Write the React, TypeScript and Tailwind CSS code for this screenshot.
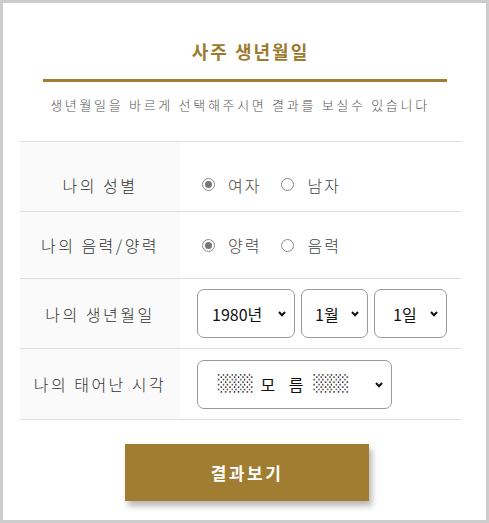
const font = { fontFamily: '"Noto Sans CJK KR", "Noto Sans", sans-serif' }

function Radio({ checked, label }: { checked?: boolean; label: string }) {
    return <label className="flex items-center gap-[13px] text-[16px] font-light tracking-[2px] text-[#444]">
        <span className="flex h-[13px] w-[13px] items-center justify-center rounded-full border border-[#8a8a8a] bg-white">
            {checked && <span className="h-[7px] w-[7px] rounded-full bg-[#777]" />}
        </span>
        {label}
    </label>
}

function Chevron() {
    return <svg className="absolute right-[8px] top-[21px]" width="8" height="6" viewBox="0 0 8 6">
        <path d="M1 1 L4 4.2 L7 1" fill="none" stroke="#111" strokeWidth="2" />
    </svg>
}

function Select({ value, width, pl = "pl-[14px]" }: { value: React.ReactNode; width: string; pl?: string }) {
    return <div className={`relative flex h-[49px] items-center rounded-[7px] border border-[#999] bg-white ${width} ${pl}`}>
        <span className="text-[16px] text-[#111]">{value}</span>
        <Chevron />
    </div>
}

function Row({ label, children, first }: { label: string; children: React.ReactNode; first?: boolean }) {
    return <div className={`grid grid-cols-[160px_1fr] border-b border-[#ddd] ${first ? "h-[70px]" : ""}`}>
        <div className={`flex items-center justify-center bg-[#fafafa] text-[16px] font-light tracking-[2.5px] text-[#333] ${first ? "pt-[16px]" : ""}`}>
            {label}
        </div>
        <div className={`flex items-center pl-[22px] ${first ? "pt-[16px]" : ""}`}>
            {children}
        </div>
    </div>
}

const Shade = () => <span className="text-[16px] tracking-[-1px] text-[#222]" style={{ fontFamily: '"DejaVu Sans Mono", monospace' }}>░░░░</span>

export default function App() {
    return <div className="h-[523px] w-[489px] border-[3px] border-[#ccc] bg-white" style={font}>
        <h1 className="pl-[12px] pt-[35px] text-center text-[18px] font-bold leading-[26px] tracking-[2px] text-[#9e7a2f]">사주 생년월일</h1>
        <div className="ml-[40px] mr-[39px] mt-[15px] h-[3px] bg-[#a07d31]" />
        <p className="mt-[13px] pr-[9px] text-center text-[13px] font-light leading-[20px] tracking-[2.7px] text-[#555]">
            생년월일을 바르게 선택해주시면 결과를 보실수 있습니다
        </p>

        <div className="ml-[17px] mr-[25px] mt-[26px] border-t border-[#ddd]">
            <Row label="나의 성별" first>
                <div className="flex items-center gap-[20px]">
                    <Radio checked label="여자" />
                    <Radio label="남자" />
                </div>
            </Row>
            <Row label="나의 음력/양력">
                <div className="flex h-[66px] items-center gap-[20px]">
                    <Radio checked label="양력" />
                    <Radio label="음력" />
                </div>
            </Row>
            <Row label="나의 생년월일">
                <div className="-ml-[5px] flex h-[69px] items-center gap-[6px]">
                    <Select value="1980년" width="w-[98px]" />
                    <Select value="1월" width="w-[67px]" pl="pl-[13px]" />
                    <Select value="1일" width="w-[73px]" pl="pl-[18px]" />
                </div>
            </Row>
            <Row label="나의 태어난 시각">
                <div className="-ml-[5px] flex h-[70px] items-center">
                    <Select
                        value={<span className="flex items-center gap-[8px]"><Shade /><span className="tracking-[2px] [word-spacing:6px]">모 름</span><Shade /></span>}
                        width="w-[195px]"
                        pl="pl-[20px]"
                    />
                </div>
            </Row>
        </div>

        <button className="ml-[122px] mt-[24px] h-[57px] w-[244px] bg-[#a07d31] text-[17px] font-bold tracking-[2.5px] text-white shadow-[3px_5px_6px_rgba(0,0,0,0.28)]">
            결과보기
        </button>
    </div>
}
